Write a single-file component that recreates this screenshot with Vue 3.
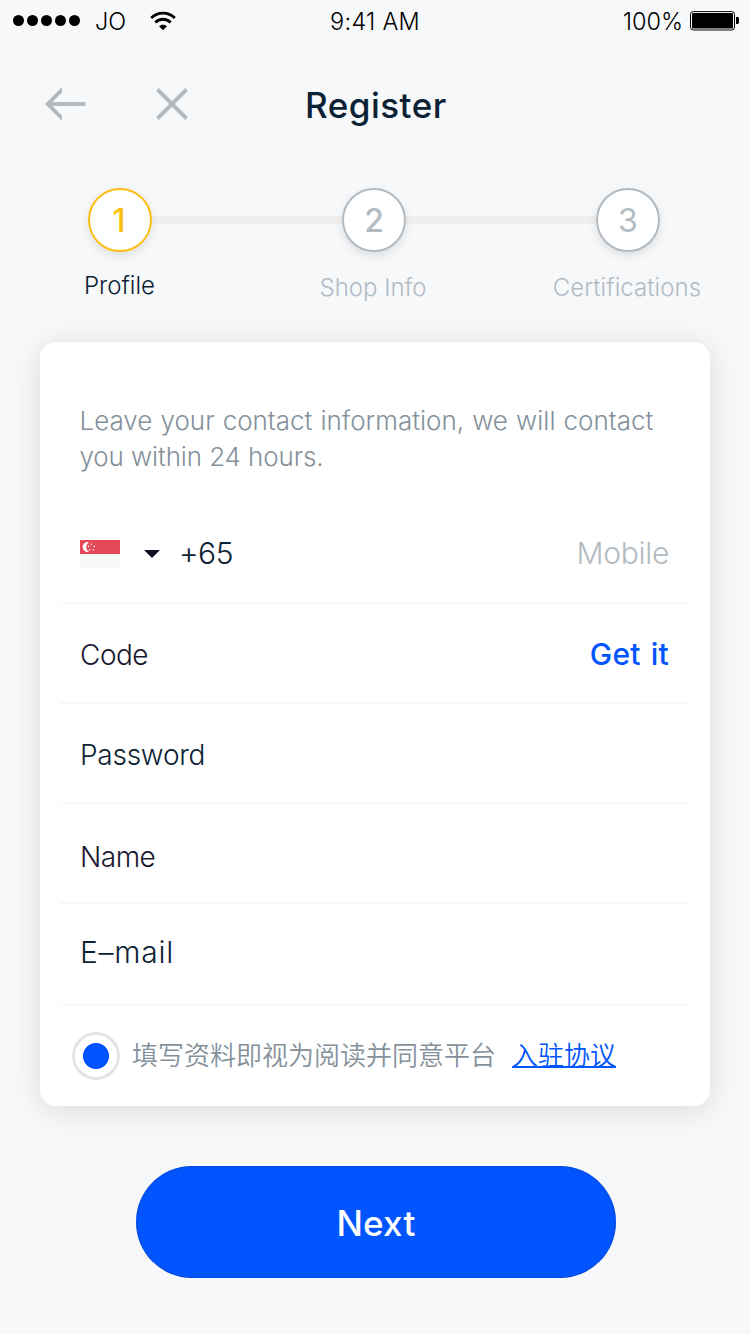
<script setup>
const steps = [
  { n: 1, label: 'Profile', cls: 'active' },
  { n: 2, label: 'Shop Info', cls: 'second' },
  { n: 3, label: 'Certifications', cls: 'third' },
]
const fields = [
  { label: 'Code', cls: 'code', action: 'Get it' },
  { label: 'Password', cls: 'password' },
  { label: 'Name', cls: 'name' },
  { label: 'E–mail', cls: 'email' },
]
</script>

<template>
  <main class="screen">
    <div class="status">
      <div class="carrier">
        <span class="dots"><i v-for="d in 5" :key="d"></i></span>
        <span class="net">JO</span>
        <svg class="wifi" width="28" height="20" viewBox="0 0 28 20">
          <path d="M2.2 7A16.6 16.6 0 0 1 25.8 7" fill="none" stroke="#000" stroke-width="2.8" />
          <path d="M6.3 11.4A11 11 0 0 1 21.7 11.4" fill="none" stroke="#000" stroke-width="2.8" />
          <path d="M10 15.3C12.2 13.2 15.8 13.2 18 15.3L14 19.2Z" />
        </svg>
      </div>
      <span class="time">9:41 AM</span>
      <div class="power">
        <span class="pct">100%</span>
        <svg width="50" height="20" viewBox="0 0 50 20">
          <rect x=".5" y=".6" width="44" height="18.4" rx="2.8" fill="#fff" stroke="#000" />
          <rect x="2" y="2" width="41" height="15.6" rx="1.2" />
          <path d="M46 6h1.6q1.4 0 1.4 1.4v4.2q0 1.4-1.4 1.4H46z" />
        </svg>
      </div>
    </div>

    <header class="nav">
      <svg class="back" width="42" height="34" viewBox="0 0 42 34">
        <path d="M17 0V5.4L7.4 15H39A2 2 0 0 1 39 19H7.4L17 28.6V34L0 17Z" fill="#b2bbc2" />
      </svg>
      <svg class="close" width="32" height="32" viewBox="0 0 32 32">
        <path d="M1.5 1.5L30.5 30.5M30.5 1.5L1.5 30.5" stroke="#b2bbc2" stroke-width="3.9" />
      </svg>
      <h1>Register</h1>
    </header>

    <section class="steps">
      <div v-for="s in steps" :key="s.n" class="step" :class="s.cls">
        <b>{{ s.n }}</b>
        <span>{{ s.label }}</span>
      </div>
    </section>

    <section class="card">
      <p class="intro"><span class="l1">Leave your contact information, we will contact</span><br /><span class="l2">you within 24 hours.</span></p>
      <div class="row phone">
        <svg class="flag" width="40" height="28" viewBox="0 0 40 28">
          <rect width="40" height="28" fill="#f7f7f7" />
          <rect width="40" height="14" fill="#e44755" />
          <path d="M9 2.2A5 5 0 1 0 9 11.8A5.6 5.6 0 0 1 9 2.2Z" fill="#fff" />
          <g fill="#fff">
            <circle cx="11.4" cy="4.2" r=".8" /><circle cx="8.6" cy="6.4" r=".8" /><circle cx="14.3" cy="6.4" r=".8" />
            <circle cx="9.7" cy="9.8" r=".8" /><circle cx="13.4" cy="9.8" r=".8" />
          </g>
        </svg>
        <svg class="caret" width="16" height="8" viewBox="0 0 16 8"><path d="M0 0H16L8 8Z" fill="#10121f" /></svg>
        <span class="dial">+65</span>
        <span class="mobile">Mobile</span>
      </div>
      <div v-for="f in fields" :key="f.label" class="row" :class="f.cls">
        <label>{{ f.label }}</label>
        <a v-if="f.action" class="get">{{ f.action }}</a>
      </div>
      <div class="agree">
        <span class="radio"></span>
        <span class="terms">填写资料即视为阅读并同意平台</span>
        <a class="link">入驻协议</a>
      </div>
    </section>

    <button class="next"><span>Next</span></button>
  </main>
</template>

<style>
html, body { margin: 0; background: #f7f8fa; }
</style>

<style scoped>
.screen {
  width: 750px;
  height: 1334px;
  overflow: hidden;
  background: #f7f8fa;
  color: #0b2234;
  font-family: Inter, "Noto Sans CJK SC", sans-serif;
  font-weight: 350;
  display: flex;
  flex-direction: column;
}
.screen * { box-sizing: border-box; white-space: nowrap; }
.status {
  height: 43px;
  display: grid;
  grid-template-columns: 1fr auto 1fr;
  align-items: center;
  padding: 0 10px 0 13px;
  color: #000;
  font-size: 23.5px;
  font-weight: 330;
}
.carrier { display: flex; align-items: center; }
.dots { display: flex; gap: 3px; margin-top: -2px; }
.dots i { width: 11px; height: 11px; border-radius: 50%; background: #000; }
.net { margin-left: 15px; width: 54px; }
.wifi { margin-top: -2px; }
.time { letter-spacing: .25px; margin-left: -3px; }
.power { display: flex; align-items: center; justify-content: flex-end; gap: 7px; }
.power svg { margin-top: -2px; }
.nav {
  height: 125px;
  display: grid;
  grid-template-columns: 111px 149px auto;
  align-items: center;
  padding-left: 45px;
}
.nav svg { margin-top: -3px; }
h1 { margin: -2px 0 0; font-size: 35px; font-weight: 460; line-height: 40px; letter-spacing: .5px; }
.steps {
  height: 174px;
  padding-top: 20px;
  display: grid;
  grid-template-columns: repeat(3, 254px);
  margin-left: -7px;
  background: linear-gradient(#efefef, #efefef) 127px 48px / 508px 8px no-repeat;
}
.step { display: flex; flex-direction: column; align-items: center; color: #b2bbc2; }
.step b {
  width: 64px;
  height: 64px;
  border: 2px solid #b2bbc2;
  border-radius: 50%;
  background: #fff;
  box-shadow: 0 4px 10px rgba(0, 0, 0, .1);
  text-align: center;
  font-size: 32px;
  line-height: 62px;
  font-weight: 500;
}
.step span { margin-top: 20px; font-size: 24px; line-height: 32px; margin-left: -2px; }
.step.active b { color: #fdbe13; border-color: #fdbe13; padding-right: 2px; }
.step.active span { color: #0b2234; margin-top: 18px; margin-left: -1px; }
.step.third b { font-weight: 370; }
.third span { letter-spacing: .08px; }
.card {
  margin: 0 40px;
  height: 764px;
  flex: none;
  border-radius: 16px;
  background: #fff;
  box-shadow: 0 4px 30px rgba(0, 0, 0, .12);
  padding: 61px 20px 0;
}
.intro { margin: 0 0 0 19.5px; font-size: 26px; line-height: 36px; height: 101px; color: #84919b; }
.l1 { word-spacing: .8px; }
.l2 { letter-spacing: -.12px; }
.row {
  height: 100px;
  padding: 0 21px 0 20px;
  border-bottom: 2px solid #f7f8f9;
  display: flex;
  align-items: center;
  font-size: 28px;
}
.phone { font-size: 30px; }
.flag { margin-top: 2px; }
.caret { margin: 1px 0 0 24px; }
.dial { margin-left: 19px; letter-spacing: -.5px; }
.mobile { margin-left: auto; color: #b2bbc2; letter-spacing: -.3px; }
.get { margin-left: auto; font-size: 30px; font-weight: 460; color: #0055ff; letter-spacing: .3px; word-spacing: 1.5px; margin-top: -2px; }
.code, .name { color: #1a1831; }
.code, .password { padding-top: 3px; }
.code label, .name label { letter-spacing: -.5px; }
.password label { letter-spacing: -.25px; }
.name { padding-top: 7px; }
.email { height: 102px; font-size: 30px; padding-bottom: 5px; letter-spacing: .75px; }
.agree { height: 100px; padding-left: 12px; display: flex; align-items: center; font-family: "Noto Sans CJK SC", sans-serif; font-size: 26px; line-height: 36px; }
.radio { width: 48px; height: 48px; border: 3px solid #e3e5ea; border-radius: 50%; background: radial-gradient(circle, #0055ff 12.6px, #fff 13.4px); }
.terms { margin: -4px 0 0 12px; color: #84919b; }
.link { margin: -4px 0 0 16px; color: #0055ff; height: 36px; text-decoration: underline; text-decoration-thickness: 2px; text-underline-offset: 1px; text-decoration-skip-ink: none; }
.next {
  margin: 60px 0 0 136px;
  width: 480px;
  height: 112px;
  border: 0;
  border-radius: 56px;
  background: #0055ff;
  box-shadow: inset 0 0 3px rgba(0, 40, 130, .5);
  color: #fff;
  font: 460 35px/112px Inter, sans-serif;
  letter-spacing: .2px;
}
</style>
